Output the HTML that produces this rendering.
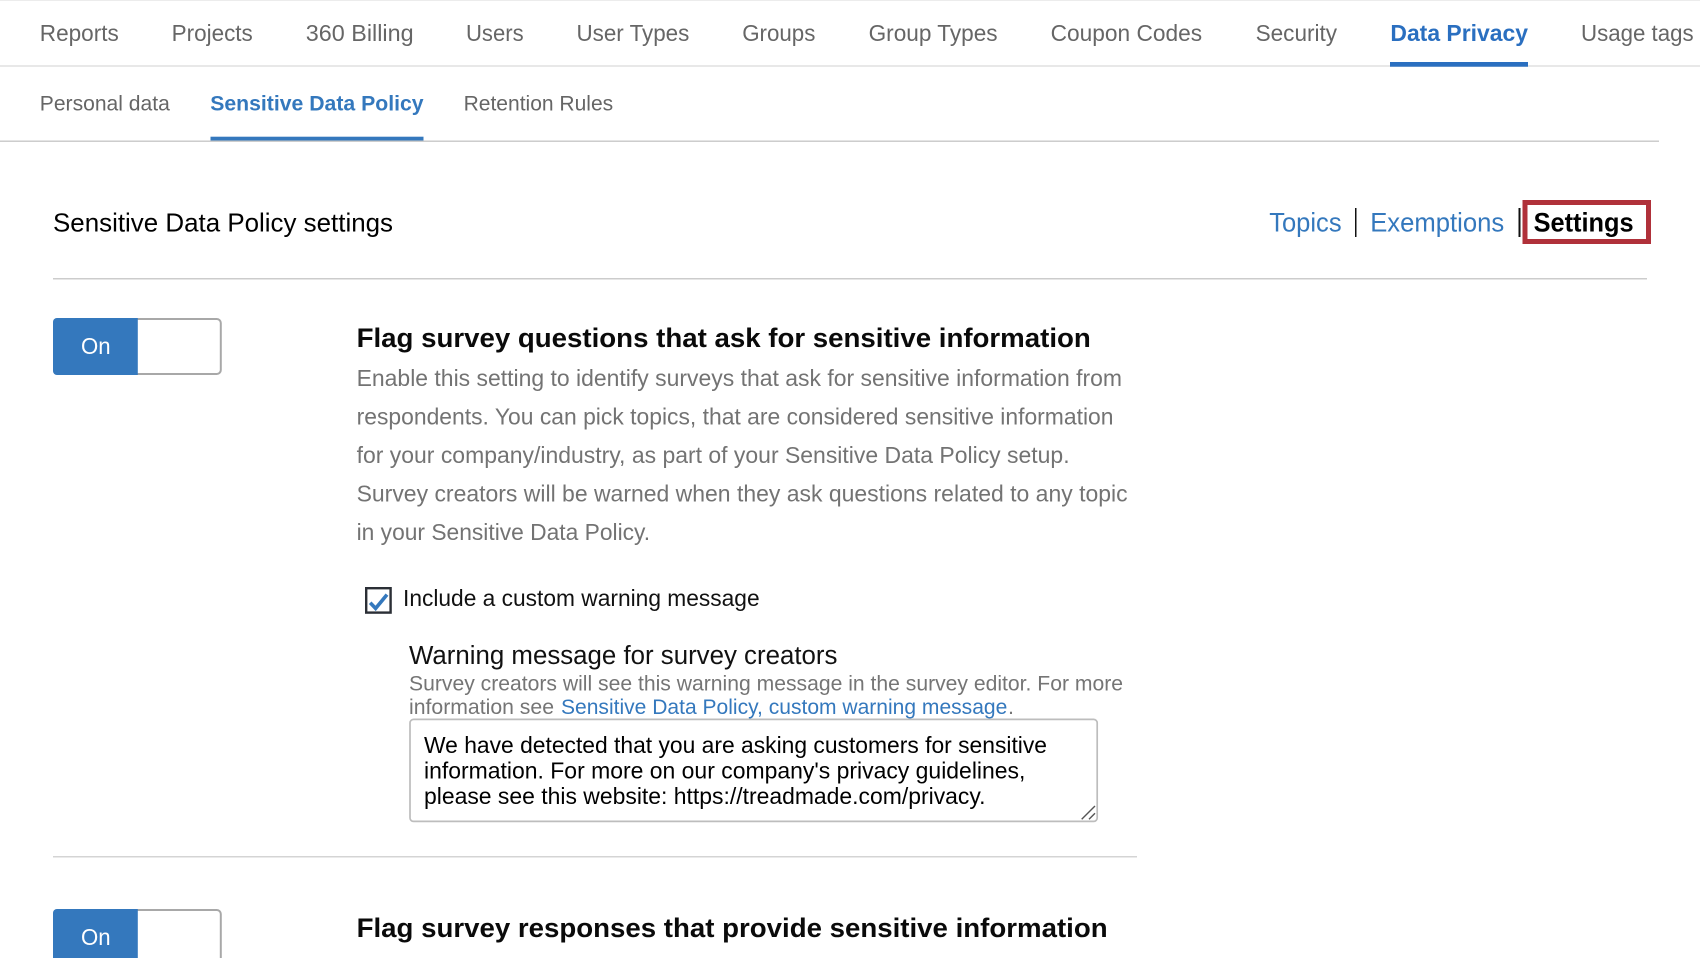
<!DOCTYPE html>
<html lang="en">
<head>
<meta charset="utf-8">
<title>Sensitive Data Policy settings</title>
<style>
html,body{margin:0;padding:0;background:#fff;width:1700px;height:958px;overflow:hidden}
svg{display:block}
text{font-family:"Liberation Sans",sans-serif;white-space:pre}
.nav{font-size:23px;fill:#666}
.sub{font-size:21.5px;fill:#666}
.act{font-weight:bold;fill:#2a6fc0}
.h1{font-size:26px;fill:#000}
.lnk{font-size:27px;fill:#3478bd}
.h2{font-size:27px;font-weight:bold;fill:#0a0a0a}
.p{font-size:23.5px;fill:#737373}
.sm{font-size:21.5px;fill:#757575}
.ta{font-size:23.5px;fill:#000}
</style>
</head>
<body>
<svg xmlns="http://www.w3.org/2000/svg" width="1700" height="958" viewBox="0 0 1700 958">
<rect width="1700" height="958" fill="#fff"/>
<rect x="0" y="0" width="1700" height="1" fill="#ececec"/>

<!-- top nav -->
<rect x="0" y="65" width="1700" height="2" fill="#e8e8e8"/>
<g class="nav">
<text class="nav" x="39.8" y="41" textLength="79" lengthAdjust="spacingAndGlyphs">Reports</text>
<text class="nav" x="171.6" y="41" textLength="81.2" lengthAdjust="spacingAndGlyphs">Projects</text>
<text class="nav" x="305.8" y="41" textLength="107.8" lengthAdjust="spacingAndGlyphs">360 Billing</text>
<text class="nav" x="466" y="41" textLength="57.6" lengthAdjust="spacingAndGlyphs">Users</text>
<text class="nav" x="576.5" y="41" textLength="112.8" lengthAdjust="spacingAndGlyphs">User Types</text>
<text class="nav" x="742.2" y="41" textLength="73.2" lengthAdjust="spacingAndGlyphs">Groups</text>
<text class="nav" x="868.6" y="41" textLength="129" lengthAdjust="spacingAndGlyphs">Group Types</text>
<text class="nav" x="1050.6" y="41" textLength="151.5" lengthAdjust="spacingAndGlyphs">Coupon Codes</text>
<text class="nav" x="1255.6" y="41" textLength="81.5" lengthAdjust="spacingAndGlyphs">Security</text>
<text class="nav act" x="1390.4" y="41" textLength="137.6" lengthAdjust="spacingAndGlyphs">Data Privacy</text>
<text class="nav" x="1581" y="41" textLength="112.6" lengthAdjust="spacingAndGlyphs">Usage tags</text>
</g>
<rect x="1390" y="62" width="138" height="4.7" fill="#2a6fc0"/>

<!-- sub nav -->
<rect x="0" y="140.5" width="1659" height="1.4" fill="#c8c8c8"/>
<text class="sub" x="39.8" y="110.6" textLength="130" lengthAdjust="spacingAndGlyphs">Personal data</text>
<text class="sub act" x="210.2" y="110.6" textLength="213.4" lengthAdjust="spacingAndGlyphs" style="fill:#3478bd">Sensitive Data Policy</text>
<text class="sub" x="463.6" y="110.6" textLength="149.6" lengthAdjust="spacingAndGlyphs">Retention Rules</text>
<rect x="210.5" y="136.7" width="213" height="3.8" fill="#3478bd"/>

<!-- title row -->
<text class="h1" x="53" y="231.6" textLength="340" lengthAdjust="spacingAndGlyphs">Sensitive Data Policy settings</text>
<text class="lnk" x="1269.2" y="231.6" textLength="72.4" lengthAdjust="spacingAndGlyphs">Topics</text>
<rect x="1355" y="208" width="1.5" height="29" fill="#111"/>
<text class="lnk" x="1370.2" y="231.6" textLength="134" lengthAdjust="spacingAndGlyphs">Exemptions</text>
<rect x="1518.5" y="208" width="2" height="29" fill="#111"/>
<rect x="1525" y="202.5" width="123.5" height="39" fill="#fff" stroke="#b0313a" stroke-width="5"/>
<text x="1533.6" y="231.6" font-size="27" font-weight="bold" fill="#000" textLength="100" lengthAdjust="spacingAndGlyphs">Settings</text>
<rect x="53" y="278" width="1594" height="1.5" fill="#cccccc"/>

<!-- toggle 1 -->
<rect x="54" y="319" width="166.8" height="55" rx="4" fill="#fff" stroke="#a8a8a8" stroke-width="2"/>
<path d="M57 318H137.8V375H57a4 4 0 0 1-4-4V322a4 4 0 0 1 4-4Z" fill="#3478bd"/>
<text x="81" y="354.2" font-size="23.5" fill="#fff" textLength="29.6" lengthAdjust="spacingAndGlyphs">On</text>

<!-- section 1 -->
<text class="h2" x="356.6" y="347" textLength="734.2" lengthAdjust="spacingAndGlyphs">Flag survey questions that ask for sensitive information</text>
<text class="p" x="356.6" y="386" textLength="765.4" lengthAdjust="spacingAndGlyphs">Enable this setting to identify surveys that ask for sensitive information from</text>
<text class="p" x="356.6" y="424.5" textLength="756.9" lengthAdjust="spacingAndGlyphs">respondents. You can pick topics, that are considered sensitive information</text>
<text class="p" x="356.6" y="463" textLength="713" lengthAdjust="spacingAndGlyphs">for your company/industry, as part of your Sensitive Data Policy setup.</text>
<text class="p" x="356.6" y="501.5" textLength="771" lengthAdjust="spacingAndGlyphs">Survey creators will be warned when they ask questions related to any topic</text>
<text class="p" x="356.6" y="540" textLength="293.5" lengthAdjust="spacingAndGlyphs">in your Sensitive Data Policy.</text>

<!-- checkbox -->
<rect x="366.2" y="588.2" width="24.4" height="24.4" fill="#fff" stroke="#2b2f36" stroke-width="2.4"/>
<path d="M370.2 602.8 L375.6 608.4 L387 594.6" fill="none" stroke="#3478bd" stroke-width="3.6"/>
<text x="403" y="606" font-size="23.5" fill="#111" textLength="356.6" lengthAdjust="spacingAndGlyphs">Include a custom warning message</text>

<!-- warning message -->
<text x="409" y="664" font-size="25.5" fill="#111" textLength="428.4" lengthAdjust="spacingAndGlyphs">Warning message for survey creators</text>
<text class="sm" x="409" y="690.6" textLength="714" lengthAdjust="spacingAndGlyphs">Survey creators will see this warning message in the survey editor. For more</text>
<text class="sm" x="409" y="714" textLength="145" lengthAdjust="spacingAndGlyphs">information see</text>
<text class="sm" x="561" y="714" textLength="446.3" lengthAdjust="spacingAndGlyphs" style="fill:#3478bd">Sensitive Data Policy, custom warning message</text>
<text class="sm" x="1008" y="714">.</text>

<!-- textarea -->
<rect x="410" y="719.4" width="687.2" height="102" rx="3.5" fill="#fff" stroke="#bdbdbd" stroke-width="1.7"/>
<text class="ta" x="424" y="753" textLength="623" lengthAdjust="spacingAndGlyphs">We have detected that you are asking customers for sensitive</text>
<text class="ta" x="424" y="778.6" textLength="601.4" lengthAdjust="spacingAndGlyphs">information. For more on our company's privacy guidelines,</text>
<text class="ta" x="424" y="804" textLength="561.5" lengthAdjust="spacingAndGlyphs">please see this website: https://treadmade.com/privacy.</text>
<path d="M1081.7 819.3 L1095 806 M1089 819.3 L1095 813.3" fill="none" stroke="#555" stroke-width="1.4"/>

<rect x="53" y="856" width="1084" height="1.5" fill="#d4d4d4"/>

<!-- toggle 2 -->
<rect x="54" y="910" width="166.8" height="70" rx="4" fill="#fff" stroke="#a8a8a8" stroke-width="2"/>
<path d="M57 909H137.8V958H53V913a4 4 0 0 1 4-4Z" fill="#3478bd"/>
<text x="81" y="945.2" font-size="23.5" fill="#fff" textLength="29.6" lengthAdjust="spacingAndGlyphs">On</text>
<text class="h2" x="356.6" y="937" textLength="751" lengthAdjust="spacingAndGlyphs">Flag survey responses that provide sensitive information</text>
</svg>
</body>
</html>
